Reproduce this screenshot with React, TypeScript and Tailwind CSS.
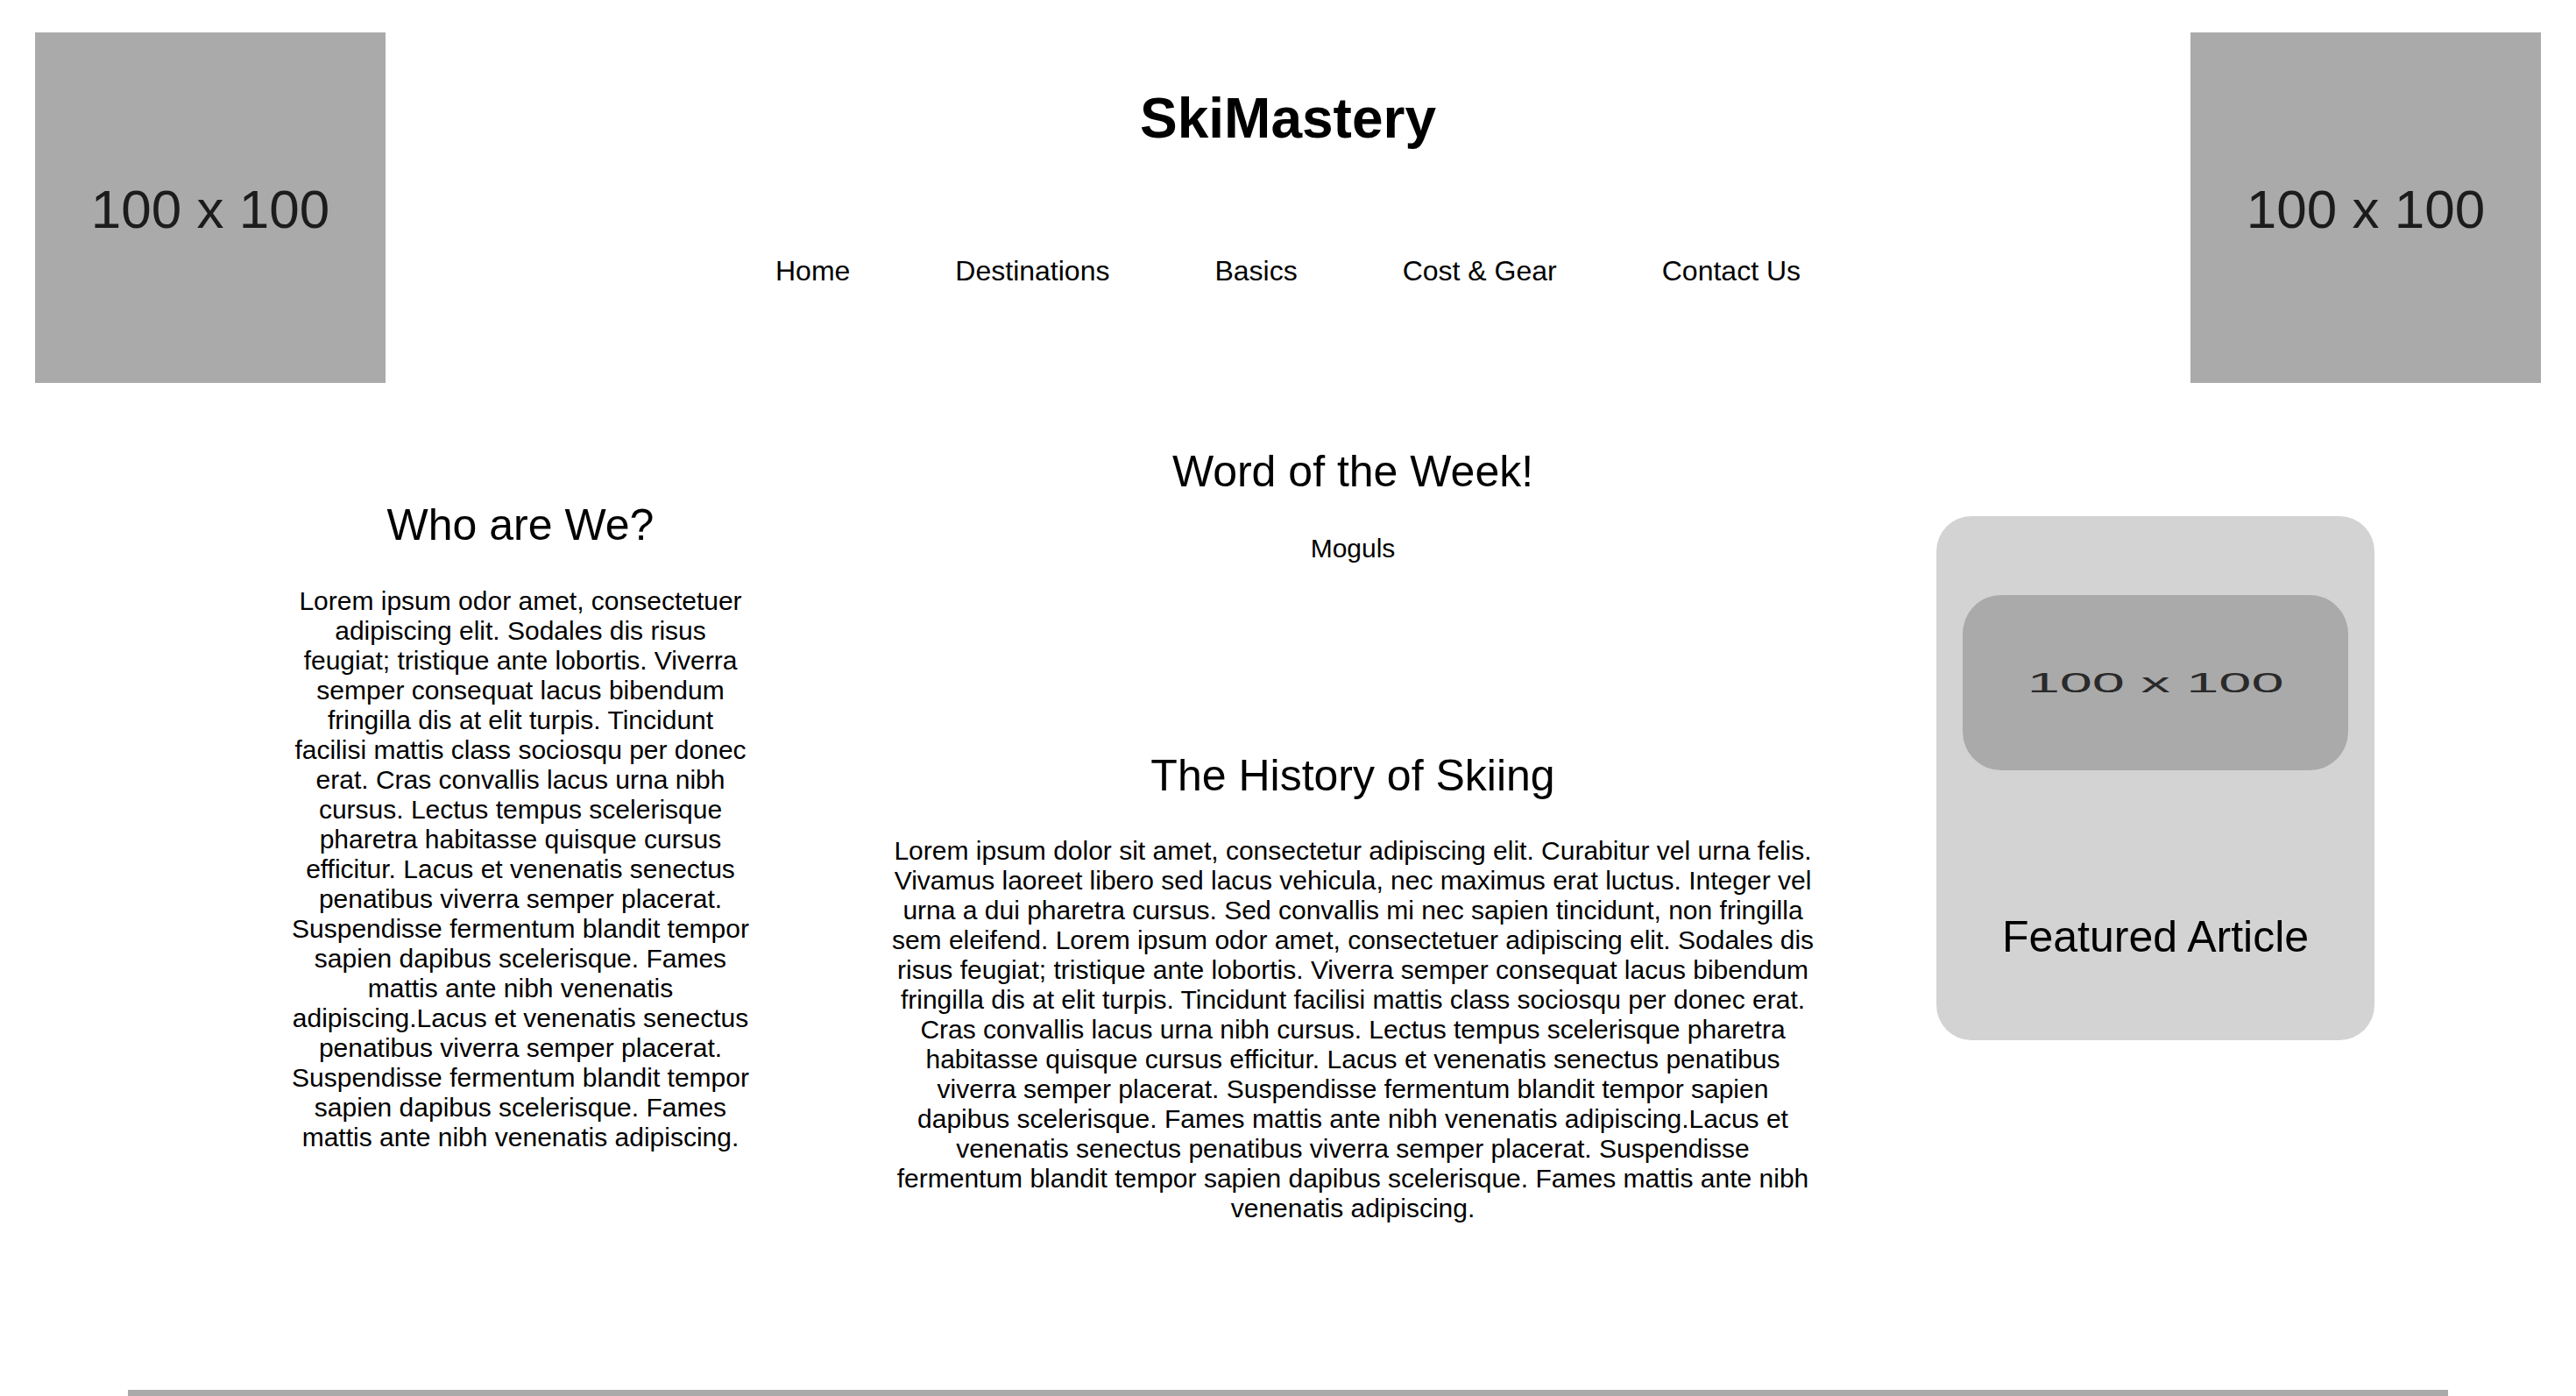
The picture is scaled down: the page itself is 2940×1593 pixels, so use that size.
const navLinks = ["Home", "Destinations", "Basics", "Cost & Gear", "Contact Us"];

const aboutText =
  "Lorem ipsum odor amet, consectetuer adipiscing elit. Sodales dis risus feugiat; tristique ante lobortis. Viverra semper consequat lacus bibendum fringilla dis at elit turpis. Tincidunt facilisi mattis class sociosqu per donec erat. Cras convallis lacus urna nibh cursus. Lectus tempus scelerisque pharetra habitasse quisque cursus efficitur. Lacus et venenatis senectus penatibus viverra semper placerat. Suspendisse fermentum blandit tempor sapien dapibus scelerisque. Fames mattis ante nibh venenatis adipiscing.Lacus et venenatis senectus penatibus viverra semper placerat. Suspendisse fermentum blandit tempor sapien dapibus scelerisque. Fames mattis ante nibh venenatis adipiscing.";

const historyText =
  "Lorem ipsum dolor sit amet, consectetur adipiscing elit. Curabitur vel urna felis. Vivamus laoreet libero sed lacus vehicula, nec maximus erat luctus. Integer vel urna a dui pharetra cursus. Sed convallis mi nec sapien tincidunt, non fringilla sem eleifend. Lorem ipsum odor amet, consectetuer adipiscing elit. Sodales dis risus feugiat; tristique ante lobortis. Viverra semper consequat lacus bibendum fringilla dis at elit turpis. Tincidunt facilisi mattis class sociosqu per donec erat. Cras convallis lacus urna nibh cursus. Lectus tempus scelerisque pharetra habitasse quisque cursus efficitur. Lacus et venenatis senectus penatibus viverra semper placerat. Suspendisse fermentum blandit tempor sapien dapibus scelerisque. Fames mattis ante nibh venenatis adipiscing.Lacus et venenatis senectus penatibus viverra semper placerat. Suspendisse fermentum blandit tempor sapien dapibus scelerisque. Fames mattis ante nibh venenatis adipiscing.";

function HeaderPlaceholder() {
  return (
    <div className="flex h-[400px] w-[400px] shrink-0 items-center justify-center bg-[#aaaaaa]">
      <span className="mt-[4px] text-[62px] leading-none text-[#1c1c1c]">100 x 100</span>
    </div>
  );
}

export default function App() {
  return (
    <div className="min-h-screen overflow-hidden bg-white font-['Liberation_Sans',Arial,sans-serif] text-black">
      {/* Header */}
      <header className="flex items-start justify-between px-[40px] pt-[37px]">
        <HeaderPlaceholder />
        <div className="flex flex-col items-center pt-[61px]">
          <h1 className="text-[64px] font-bold leading-[74px]">SkiMastery</h1>
          <nav className="mt-[119px] flex gap-[120px] text-[32px] leading-[37px]">
            {navLinks.map((link) => (
              <a key={link} href="#" className="text-black">
                {link}
              </a>
            ))}
          </nav>
        </div>
        <HeaderPlaceholder />
      </header>

      {/* Main */}
      <main className="flex items-start pl-[329px]">
        {/* Left — about */}
        <section className="mt-[134px] w-[530px] shrink-0 text-center">
          <h2 className="text-[50px] leading-[57px]">Who are We?</h2>
          <p className="mt-[41px] text-[30px] leading-[34px]">{aboutText}</p>
        </section>

        {/* Middle — word of the week + history */}
        <section className="ml-[158px] mt-[73px] w-[1054px] shrink-0 text-center">
          <h2 className="text-[50px] leading-[57px]">Word of the Week!</h2>
          <p className="mt-[42px] text-[30px] leading-[34px]">Moguls</p>
          <h2 className="mt-[214px] text-[50px] leading-[57px]">The History of Skiing</h2>
          <p className="mt-[40px] text-[30px] leading-[34px]">{historyText}</p>
        </section>

        {/* Right — featured card */}
        <aside className="ml-[139px] mt-[152px] flex h-[598px] w-[500px] shrink-0 flex-col items-center rounded-[40px] bg-[#d3d3d3] px-[30px] pt-[90px]">
          <div className="flex h-[200px] w-[440px] items-center justify-center overflow-hidden rounded-[44px] bg-[#aaaaaa]">
            <span className="inline-block scale-x-[2.15] text-[31px] leading-none text-[#2a2a2a]">100 x 100</span>
          </div>
          <h3 className="mt-[162px] text-[50px] leading-[57px]">Featured Article</h3>
        </aside>
      </main>

      {/* Footer */}
      <footer className="mx-[146px] mt-[190px] h-[120px] bg-[#aaaaaa]" />
    </div>
  );
}
